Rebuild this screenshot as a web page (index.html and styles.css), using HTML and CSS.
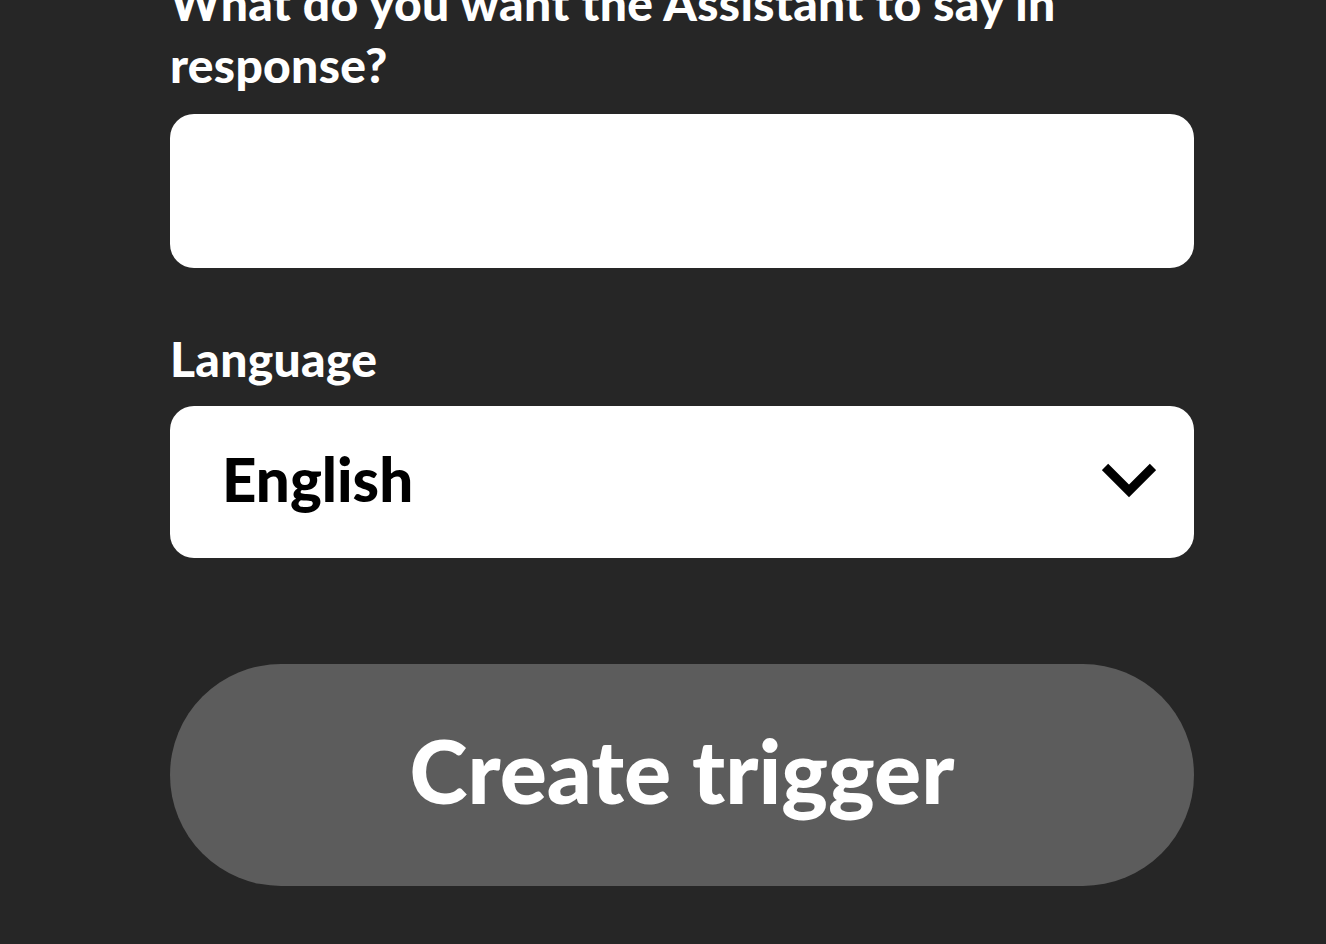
FILE: index.html
```html
<!DOCTYPE html>
<html lang="en">
<head>
<meta charset="utf-8">
<title>Create trigger</title>
<link rel="stylesheet" href="styles.css">
</head>
<body>
<main class="form">
  <div class="field">
    <label class="label" for="resp">What do you want the Assistant to say in response?</label>
    <input class="text-input" id="resp" type="text">
  </div>
  <div class="field field-lang">
    <label class="label" for="lang">Language</label>
    <div class="select">
      <span class="select-value">English</span>
      <svg class="chevron" width="54" height="36" viewBox="0 0 54 36"><path d="M3 5 L27 29 L51 5" fill="none" stroke="#000" stroke-width="9"/></svg>
    </div>
  </div>
  <button class="submit" type="button">Create trigger</button>
</main>
</body>
</html>
```
FILE: styles.css
```css
html, body {
  margin: 0;
  padding: 0;
  background: #262626;
  height: 100%;
  overflow: hidden;
}
body {
  font-family: Lato, "Noto Sans", sans-serif;
  color: #fff;
}
.form {
  width: 1024px;
  margin-left: 170px;
  display: flex;
  flex-direction: column;
  margin-top: -28px;
}
.field {
  display: flex;
  flex-direction: column;
}
.label {
  font-size: 48px;
  font-weight: 900;
  line-height: 62px;
  letter-spacing: 0.3px;
  display: block;
  margin-bottom: 18px;
}
.text-input {
  height: 154px;
  border: none;
  border-radius: 24px;
  background: #fff;
  box-sizing: border-box;
  padding: 0 52px;
  font: inherit;
  outline: none;
}
.field-lang {
  margin-top: 60px;
}
.field-lang .label {
  margin-bottom: 16px;
}
.select {
  height: 152px;
  border-radius: 24px;
  background: #fff;
  color: #000;
  display: flex;
  align-items: center;
  justify-content: space-between;
  padding: 0 38px 0 52px;
}
.select-value {
  font-size: 60px;
  font-weight: 900;
  line-height: 1;
  margin-top: -6px;
}
.chevron {
  display: block;
  margin-top: -4px;
}
.submit {
  margin-top: 106px;
  height: 222px;
  border: none;
  border-radius: 111px;
  background: #5c5c5c;
  color: #fff;
  font-family: inherit;
  font-size: 88px;
  font-weight: 900;
  line-height: 1;
  padding: 0 0 10px;
  cursor: pointer;
}
```
